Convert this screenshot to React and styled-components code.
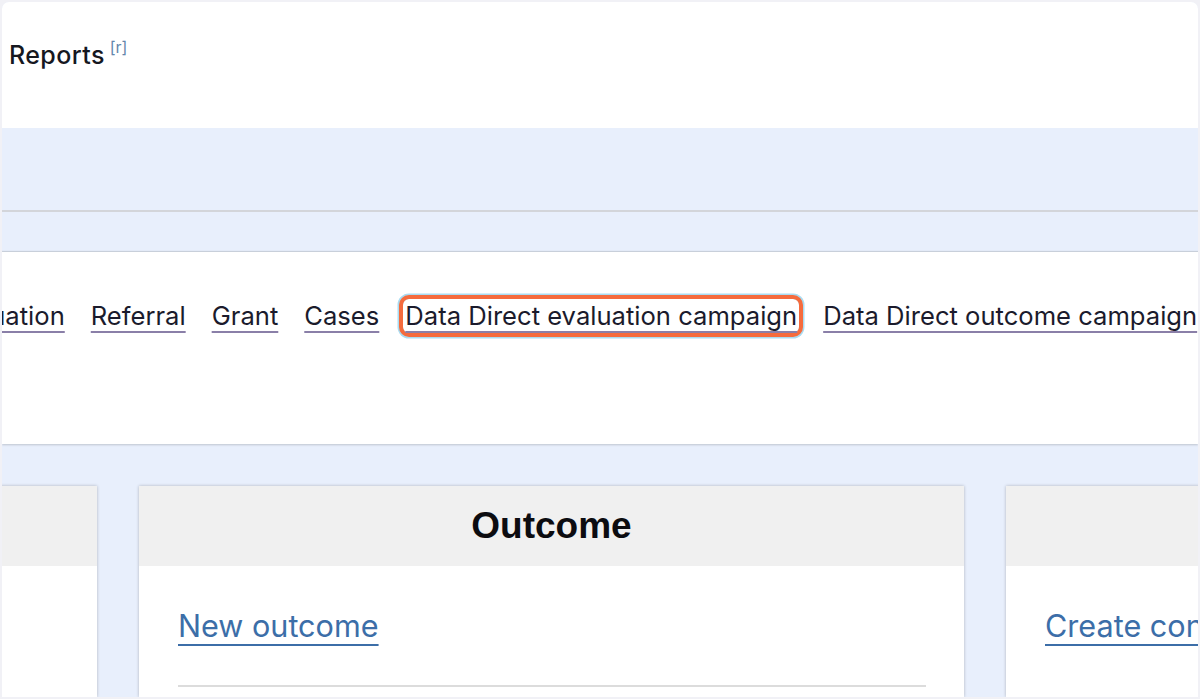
import React from "react";
import styled, { createGlobalStyle } from "styled-components";

const GlobalStyle = createGlobalStyle`
  html, body {
    margin: 0;
    padding: 0;
    background: #f1f1f6;
    font-family: "Inter", "Liberation Sans", sans-serif;
  }
`;

const navLinks = [
  "Evaluation",
  "Referral",
  "Grant",
  "Cases",
  "Data Direct evaluation campaign",
  "Data Direct outcome campaign",
  "Reports",
];

const cards = [
  { title: "Evaluation", link: "", divider: false },
  { title: "Outcome", link: "New outcome", divider: true },
  { title: "Contacts", link: "Create contact form", divider: false },
];

export default function App() {
  return (
    <>
      <GlobalStyle />
      <Frame>
        <Page>
          <Header>
            <Title>Reports</Title>
            <Shortcut>[r]</Shortcut>
          </Header>
          <Band />
          <Rule />
          <Spacer />
          <NavPanel>
            <NavRow>
              {navLinks.map((l) => (
                <NavLink key={l} focused={l === "Data Direct evaluation campaign"}>
                  {l}
                </NavLink>
              ))}
            </NavRow>
          </NavPanel>
          <CardArea>
            <CardRow>
              {cards.map((c) => (
                <Card key={c.title}>
                  <CardHead>{c.title}</CardHead>
                  <CardBody>
                    {c.link && <CardLink>{c.link}</CardLink>}
                    {c.divider && <Divider />}
                  </CardBody>
                </Card>
              ))}
            </CardRow>
          </CardArea>
        </Page>
      </Frame>
    </>
  );
}

const Frame = styled.div`
  width: 1200px;
  height: 699px;
  box-sizing: border-box;
  padding: 2px 2px 2px 2px;
  overflow: hidden;
`;

const Page = styled.div`
  height: 100%;
  background: #e8effc;
  border-radius: 7px 7px 0 0;
  overflow: hidden;
  display: flex;
  flex-direction: column;
`;

const Header = styled.div`
  height: 126px;
  background: #ffffff;
  display: flex;
  align-items: flex-start;
  padding: 38px 0 0 7px;
  box-sizing: border-box;
  flex-shrink: 0;
`;

const Title = styled.span`
  font-size: 25px;
  font-weight: 500;
  color: #16181f;
  letter-spacing: 0.4px;
`;

const Shortcut = styled.sup`
  font-size: 16px;
  color: #6486ab;
  margin-left: 5px;
  line-height: 1;
  position: relative;
  top: -1px;
`;

const Band = styled.div`
  height: 82px;
  flex-shrink: 0;
`;

const Rule = styled.div`
  height: 2px;
  background: #d3d5da;
  flex-shrink: 0;
`;

const Spacer = styled.div`
  height: 40px;
  flex-shrink: 0;
`;

const NavPanel = styled.div`
  height: 192px;
  flex-shrink: 0;
  background: #ffffff;
  box-shadow: 0 1px 2px rgba(0, 0, 0, 0.18), 0 -1px 1px rgba(0, 0, 0, 0.12);
  display: flex;
  align-items: flex-start;
  padding-top: 47px;
  box-sizing: border-box;
`;

const NavRow = styled.div`
  display: flex;
  gap: 26px;
  margin-left: -62px;
  white-space: nowrap;
`;

const NavLink = styled.a`
  font-size: 25.6px;
  color: #1b1b2c;
  text-decoration: underline;
  text-decoration-color: #8a7fa8;
  text-decoration-thickness: 2px;
  text-underline-offset: 6px;
  line-height: 34px;
  border-radius: 6px;
  padding: 0 ${(p) => (p.focused ? "2px" : "0")};
  margin: 0 ${(p) => (p.focused ? "-2px" : "0")};
  box-shadow: ${(p) =>
    p.focused ? "0 0 0 4px #f56b3d, 0 0 0 5.5px #a9dcf2" : "none"};
`;

const CardArea = styled.div`
  padding-top: 42px;
  flex: 1;
  overflow: hidden;
`;

const CardRow = styled.div`
  display: flex;
  gap: 42px;
  margin-left: -730px;
  height: 100%;
`;

const Card = styled.div`
  width: 825px;
  flex-shrink: 0;
  background: #ffffff;
  box-shadow: 0 0 3px rgba(0, 0, 0, 0.25);
  display: flex;
  flex-direction: column;
`;

const CardHead = styled.div`
  height: 80px;
  background: #f0f0f0;
  display: flex;
  align-items: center;
  justify-content: center;
  font-family: "Liberation Sans", Arial, sans-serif;
  font-weight: 700;
  font-size: 37px;
  color: #0c0c10;
`;

const CardBody = styled.div`
  padding: 40px 38px 0 39px;
`;

const CardLink = styled.a`
  font-size: 30.6px;
  color: #3c6ea8;
  text-decoration: underline;
  text-decoration-thickness: 2px;
  text-underline-offset: 7px;
  line-height: 40px;
  white-space: nowrap;
`;

const Divider = styled.div`
  height: 2px;
  background: #dcdcdc;
  margin-top: 39px;
`;
